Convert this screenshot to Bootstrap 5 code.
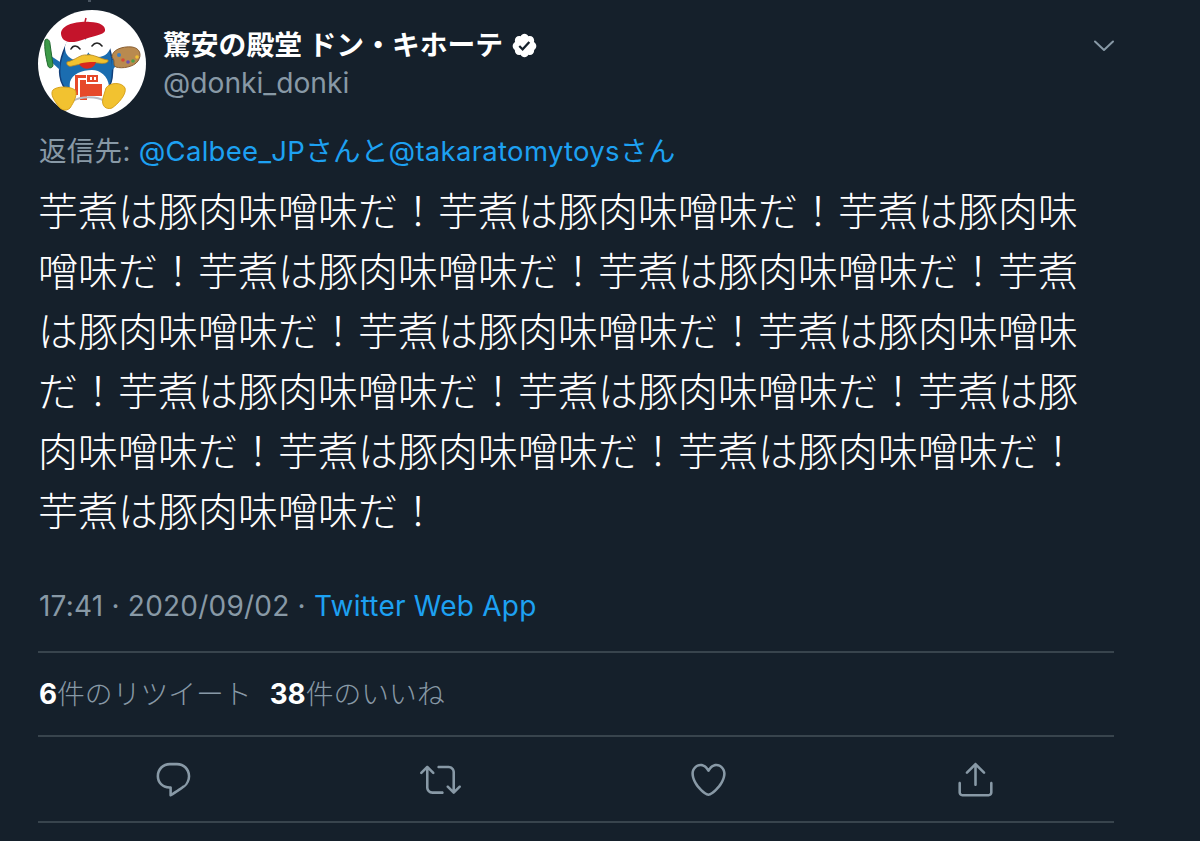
<!DOCTYPE html>
<html lang="ja">
<head>
<meta charset="utf-8">
<title>ツイート</title>
<link rel="stylesheet" href="https://cdn.jsdelivr.net/npm/bootstrap@5.3.0/dist/css/bootstrap.min.css">
<style>
html,body{height:100%}
body{background:#15202b;color:#fff;font-family:Inter,"Noto Sans CJK JP",sans-serif;overflow:hidden}
.tw-page{width:1076px;margin-left:38px;padding-top:10px}
.tw-head{height:108px}
.tw-avatar{width:108px;height:108px;flex:none;position:relative;margin-right:17px}
.tw-avatar svg{display:block}
.tw-thread{position:absolute;left:50px;top:-10px;width:3px;height:2px;background:#4a5561}
.tw-name{font-size:27.8px;line-height:36px;font-weight:700;margin-top:17px;white-space:nowrap}
.tw-handle{font-size:28.2px;line-height:38px;color:#8899a6;padding-top:1px}
.tw-chev{margin-top:29px;margin-right:-2px}
.tw-reply{font-size:27.5px;line-height:36px;color:#8899a6;margin-top:15px;padding-left:1px;letter-spacing:.3px}
.tw-blue{color:#1da1f2;text-decoration:none}
.tw-text{font-family:"Noto Sans CJK JP",sans-serif;font-weight:300;font-size:40px;line-height:60px;margin:10px 0 0 0;width:1061px;word-break:break-all}
.tw-meta{font-size:28px;line-height:36px;color:#8899a6;margin-top:49px;padding-left:1px;letter-spacing:.22px}
.tw-stats{border-top:2px solid #38444d;border-bottom:2px solid #38444d;height:86px;margin-top:27px;font-size:27.8px;color:#8899a6;padding-left:1px;padding-top:2px;font-weight:300;column-gap:18px}
.tw-stats b{color:#fff;font-weight:700}
.tw-actions{height:86px;border-bottom:2px solid #38444d;padding:0 5px 0 2px}
.tw-act{flex:1 1 0;text-align:center;line-height:0}
.tw-act svg{width:41px;height:41px;fill:#8899a6}
</style>
</head>
<body>
<main class="tw-page">
  <div class="tw-head d-flex align-items-start">
    <div class="tw-avatar">
      <span class="tw-thread"></span>
      <svg width="108" height="108" viewBox="0 0 108 108" role="img" aria-label="ドン・キホーテ">
        <circle cx="54" cy="54" r="54" fill="#fff"/>
        <path d="M33 26C40 14 62 14 68 30C74 42 76 56 74 68C72 80 66 86 52 86C36 86 24 82 22 66C20 52 26 38 33 26Z" fill="#1b6db0" stroke="#123f7a" stroke-width="1.5"/>
        <path d="M22 52L10 44L9 48L22 60Z" fill="#1b6db0"/>
        <path d="M74 50L84 44L84 50L74 60Z" fill="#1b6db0"/>
        <path d="M7 30C9 28 12 30 12 34L15 55C15 58 11 59 10 56C8 48 6 38 7 30Z" fill="#3d9a48" stroke="#21692f" stroke-width="1"/>
        <path d="M74 47C74 40 84 36 94 37C102 38 104 45 100 51C96 57 84 59 78 57C74 55 78 51 74 47Z" fill="#b98a4f" stroke="#8a5f33" stroke-width="1"/>
        <circle cx="81" cy="45" r="2" fill="#3d7fc4"/><circle cx="85" cy="50" r="1.8" fill="#d84a35"/><circle cx="90" cy="52" r="1.8" fill="#6b4fb0"/><circle cx="95" cy="51" r="1.8" fill="#4aa04a"/><circle cx="99" cy="47" r="1.8" fill="#f1c232"/>
        <ellipse cx="39" cy="38" rx="12" ry="12" fill="#fff"/>
        <ellipse cx="60" cy="34" rx="13" ry="13" fill="#fff"/>
        <path d="M33 39C35 35 39 35 42 39M54 36C57 32 61 32 64 36" fill="none" stroke="#222" stroke-width="1.6" stroke-linecap="round"/>
        <path d="M23 24C23 15 38 11 52 12C62 12 68 16 67 21C66 25 54 26 44 30C36 33 24 34 23 24Z" fill="#c4142b"/>
        <path d="M47 12L48 8" stroke="#c4142b" stroke-width="1.5"/>
        <path d="M29 52C38 50 42 44 49 45C56 44 62 49 70 50C71 53 66 54 60 53C54 52 42 54 34 56C31 57 28 55 29 52Z" fill="#f2c230" stroke="#b8851c" stroke-width=".8"/>
        <path d="M41 54C47 52 54 52 58 52C56 60 45 61 41 54Z" fill="#d9281e"/>
        <path d="M32 72C34 64 44 60 54 60C62 60 70 66 71 76C72 84 66 92 52 93C38 93 30 84 32 72Z" fill="#fff"/>
        <path d="M37 65H48V68H40V85H37Z" fill="#e6492a"/>
        <path d="M49 65H60V72H49Z" fill="#e6492a"/>
        <path d="M52 67H54V70H52ZM56 67H58V70H56Z" fill="#fff"/>
        <path d="M42 70H48V74H64V86H49V90H42Z" fill="#e6492a"/>
        <path d="M35 91C42 86 60 86 66 91" fill="none" stroke="#b9bcc4" stroke-width="2"/>
        <path d="M15 80C19 76 32 76 37 80C40 84 36 92 32 98C28 102 22 100 19 94C16 90 12 84 15 80Z" fill="#f2c230" stroke="#d8a21d" stroke-width="1"/>
        <path d="M68 78C72 72 84 72 87 78C89 84 80 94 74 98C68 100 63 96 65 88Z" fill="#f2c230" stroke="#d8a21d" stroke-width="1"/>
      </svg>
    </div>
    <div class="flex-grow-1">
      <div class="tw-name d-flex align-items-center">驚安の殿堂 ドン・キホーテ
        <svg class="ms-2" width="27" height="27" viewBox="0 0 24 24"><path fill="#fff" d="M22.5 12.5c0-1.58-.875-2.95-2.148-3.6.154-.435.238-.905.238-1.4 0-2.21-1.71-3.998-3.818-3.998-.47 0-.92.084-1.336.25C14.818 2.415 13.51 1.5 12 1.5s-2.816.917-3.437 2.25c-.415-.165-.866-.25-1.336-.25-2.11 0-3.818 1.79-3.818 4 0 .494.083.964.237 1.4-1.272.65-2.147 2.018-2.147 3.6 0 1.495.782 2.798 1.942 3.486-.02.17-.032.34-.032.514 0 2.21 1.708 4 3.818 4 .47 0 .92-.086 1.335-.25.62 1.334 1.926 2.25 3.437 2.25 1.512 0 2.818-.916 3.437-2.25.415.163.865.248 1.336.248 2.11 0 3.818-1.79 3.818-4 0-.174-.012-.344-.033-.513 1.158-.687 1.943-1.99 1.943-3.484z"/><path fill="#15202b" d="M10.35 16.8l-3.7-3.7 1.4-1.4 2.2 2.2 5.3-5.7 1.5 1.4z"/></svg>
      </div>
      <div class="tw-handle">@donki_donki</div>
    </div>
    <svg class="tw-chev flex-none" width="24" height="14" viewBox="0 0 24 14"><path d="M3 2.5L12 11L21 2.5" fill="none" stroke="#8899a6" stroke-width="2" stroke-linecap="round" stroke-linejoin="round"/></svg>
  </div>
  <div class="tw-reply">返信先: <a class="tw-blue" href="#">@Calbee_JPさんと@takaratomytoysさん</a></div>
  <p class="tw-text">芋煮は豚肉味噌味だ！芋煮は豚肉味噌味だ！芋煮は豚肉味噌味だ！芋煮は豚肉味噌味だ！芋煮は豚肉味噌味だ！芋煮は豚肉味噌味だ！芋煮は豚肉味噌味だ！芋煮は豚肉味噌味だ！芋煮は豚肉味噌味だ！芋煮は豚肉味噌味だ！芋煮は豚肉味噌味だ！芋煮は豚肉味噌味だ！芋煮は豚肉味噌味だ！芋煮は豚肉味噌味だ！</p>
  <div class="tw-meta">17:41 · 2020/09/02 · <a class="tw-blue" href="#">Twitter Web App</a></div>
  <div class="tw-stats d-flex align-items-center">
    <span><b>6</b>件のリツイート</span>
    <span><b>38</b>件のいいね</span>
  </div>
  <div class="tw-actions d-flex align-items-center">
    <div class="tw-act"><svg viewBox="0 0 24 24"><path d="M14.046 2.242l-4.148-.01h-.002c-4.374 0-7.8 3.427-7.8 7.802 0 4.098 3.186 7.206 7.465 7.37v3.828c0 .108.044.286.12.403.142.225.384.347.632.347.138 0 .277-.038.402-.118.264-.168 6.473-4.14 8.088-5.506 1.902-1.61 3.04-3.97 3.043-6.312v-.017c-.006-4.367-3.43-7.787-7.8-7.788zm3.787 12.972c-1.134.96-4.862 3.405-6.772 4.643V16.67c0-.414-.335-.75-.75-.75h-.396c-3.66 0-6.318-2.476-6.318-5.886 0-3.534 2.768-6.302 6.3-6.302l4.147.01h.002c3.532 0 6.3 2.766 6.302 6.296-.003 2.147-1.047 4.333-2.514 5.576z"/></svg></div>
    <div class="tw-act"><svg viewBox="0 0 24 24"><path d="M23.77 15.67c-.292-.293-.767-.293-1.06 0l-2.22 2.22V7.65c0-2.068-1.683-3.75-3.75-3.75h-5.85c-.414 0-.75.336-.75.75s.336.75.75.75h5.85c1.24 0 2.25 1.01 2.25 2.25v10.24l-2.22-2.22c-.293-.293-.768-.293-1.06 0s-.294.768 0 1.06l3.5 3.5c.145.147.337.22.53.22s.383-.072.53-.22l3.5-3.5c.294-.292.294-.767 0-1.06zm-10.66 3.28H7.26c-1.24 0-2.25-1.01-2.25-2.25V6.46l2.22 2.22c.148.147.34.22.532.22s.384-.073.53-.22c.293-.293.293-.768 0-1.06l-3.5-3.5c-.293-.294-.768-.294-1.06 0l-3.5 3.5c-.294.292-.294.767 0 1.06s.767.293 1.06 0l2.22-2.22V16.7c0 2.068 1.683 3.75 3.75 3.75h5.85c.414 0 .75-.336.75-.75s-.337-.75-.75-.75z"/></svg></div>
    <div class="tw-act"><svg viewBox="0 0 24 24"><path d="M12 21.638h-.014C9.403 21.59 1.95 14.856 1.95 8.478c0-3.064 2.525-5.754 5.403-5.754 2.29 0 3.83 1.58 4.646 2.73.814-1.148 2.354-2.73 4.645-2.73 2.88 0 5.404 2.69 5.404 5.755 0 6.376-7.454 13.11-10.037 13.157H12zM7.354 4.225c-2.08 0-3.903 1.988-3.903 4.255 0 5.74 7.034 11.596 8.55 11.658 1.518-.062 8.55-5.917 8.55-11.658 0-2.267-1.823-4.255-3.903-4.255-2.528 0-3.94 2.936-3.952 2.965-.23.562-1.156.562-1.387 0-.014-.03-1.425-2.965-3.954-2.965z"/></svg></div>
    <div class="tw-act"><svg viewBox="0 0 24 24"><path d="M17.53 7.47l-5-5c-.293-.293-.768-.293-1.06 0l-5 5c-.294.293-.294.768 0 1.06s.767.294 1.06 0l3.72-3.72V15c0 .414.336.75.75.75s.75-.336.75-.75V4.81l3.72 3.72c.146.147.338.22.53.22s.384-.072.53-.22c.293-.293.293-.767 0-1.06z"/><path d="M19.708 21.944H4.292C3.028 21.944 2 20.916 2 19.652V14c0-.414.336-.75.75-.75s.75.336.75.75v5.652c0 .437.355.792.792.792h15.416c.437 0 .792-.355.792-.792V14c0-.414.336-.75.75-.75s.75.336.75.75v5.652c0 1.264-1.028 2.292-2.292 2.292z"/></svg></div>
  </div>
</main>
<script src="https://cdn.jsdelivr.net/npm/bootstrap@5.3.0/dist/js/bootstrap.bundle.min.js"></script>
</body>
</html>
